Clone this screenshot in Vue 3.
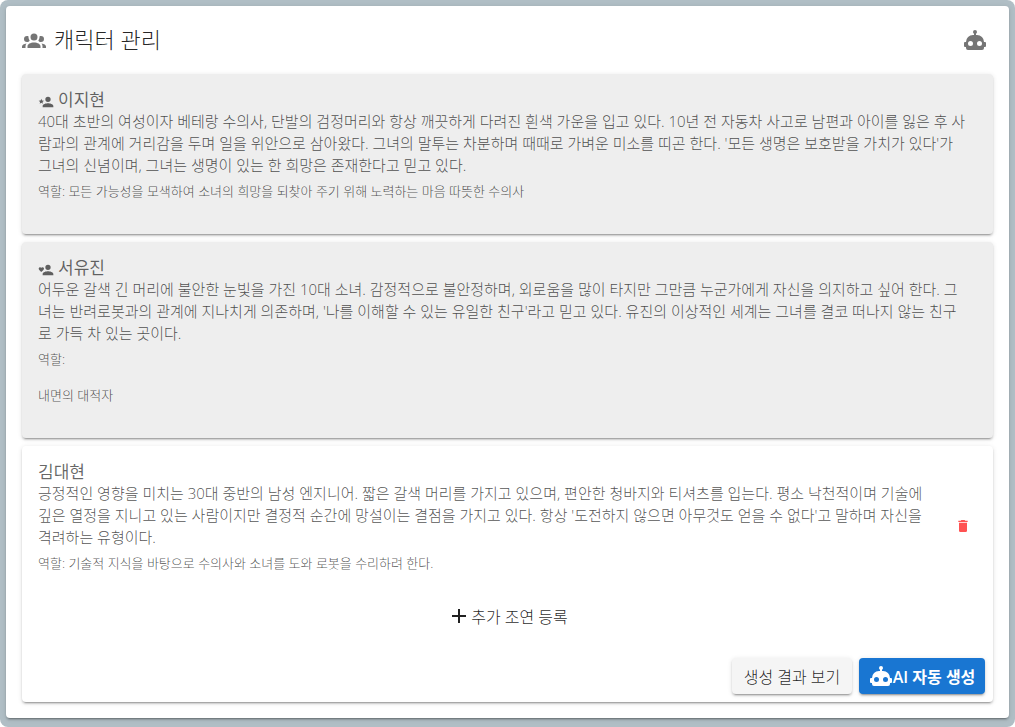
<template>
  <div class="page">
    <main class="panel">
      <header class="toolbar">
        <h1 class="toolbar-title">
          <svg class="icon" viewBox="0 0 24 24" aria-hidden="true">
            <path :d="icons.group" />
          </svg>
          캐릭터 관리
        </h1>
        <button type="button" class="icon-button" aria-label="AI 자동 생성">
          <svg class="icon" viewBox="0 0 24 24" aria-hidden="true">
            <path :d="icons.robot" />
          </svg>
        </button>
      </header>

      <section
        v-for="character in characters"
        :key="character.name"
        class="card"
        :class="{ locked: character.icon }"
      >
        <div class="card-row">
          <div class="card-text">
            <h2 class="name">
              <svg
                v-if="character.icon"
                class="icon small"
                viewBox="0 0 24 24"
                aria-hidden="true"
              >
                <path :d="icons[character.icon]" />
              </svg>
              {{ character.name }}
            </h2>
            <p class="description">{{ character.description }}</p>
            <p v-for="line in character.role" :key="line" class="role">
              {{ line }}
            </p>
          </div>
          <button
            v-if="!character.icon"
            type="button"
            class="icon-button delete"
            aria-label="삭제"
            @click="remove(character)"
          >
            <svg class="icon small" viewBox="0 0 24 24" aria-hidden="true">
              <path :d="icons.trash" />
            </svg>
          </button>
        </div>

        <template v-if="!character.icon">
          <div class="add-row">
            <button type="button" class="button text">
              <svg class="icon" viewBox="0 0 24 24" aria-hidden="true">
                <path :d="icons.plus" />
              </svg>
              추가 조연 등록
            </button>
          </div>
          <div class="actions">
            <button type="button" class="button">생성 결과 보기</button>
            <button type="button" class="button primary">
              <svg class="icon" viewBox="0 0 24 24" aria-hidden="true">
                <path :d="icons.robot" />
              </svg>
              AI 자동 생성
            </button>
          </div>
        </template>
      </section>
    </main>
  </div>
</template>

<script setup>
import { ref } from "vue";

const person =
  "M15,14C12.33,14 7,15.33 7,18V20H23V18C23,15.33 17.67,14 15,14M15,12A4,4 0 0,0 19,8A4,4 0 0,0 15,4A4,4 0 0,0 11,8A4,4 0 0,0 15,12Z";

const icons = {
  group:
    "M12,5.5A3.5,3.5 0 0,1 15.5,9A3.5,3.5 0 0,1 12,12.5A3.5,3.5 0 0,1 8.5,9A3.5,3.5 0 0,1 12,5.5M5,8C5.56,8 6.08,8.15 6.53,8.42C6.38,9.85 6.8,11.27 7.66,12.38C7.16,13.34 6.16,14 5,14A3,3 0 0,1 2,11A3,3 0 0,1 5,8M19,8A3,3 0 0,1 22,11A3,3 0 0,1 19,14C17.84,14 16.84,13.34 16.34,12.38C17.2,11.27 17.62,9.85 17.47,8.42C17.92,8.15 18.44,8 19,8M5.5,18.25C5.5,16.18 8.41,14.5 12,14.5C15.59,14.5 18.5,16.18 18.5,18.25V20H5.5V18.25M0,20V18.5C0,17.11 1.89,15.94 4.45,15.6C3.86,16.28 3.5,17.22 3.5,18.25V20H0M24,20H20.5V18.25C20.5,17.22 20.14,16.28 19.55,15.6C22.11,15.94 24,17.11 24,18.5V20Z",
  robot:
    "M12,2A2,2 0 0,1 14,4C14,4.74 13.6,5.39 13,5.73V7H14A7,7 0 0,1 21,14H22A1,1 0 0,1 23,15V18A1,1 0 0,1 22,19H21V20A2,2 0 0,1 19,22H5A2,2 0 0,1 3,20V19H2A1,1 0 0,1 1,18V15A1,1 0 0,1 2,14H3A7,7 0 0,1 10,7H11V5.73C10.4,5.39 10,4.74 10,4A2,2 0 0,1 12,2M7.5,13A2.5,2.5 0 0,0 5,15.5A2.5,2.5 0 0,0 7.5,18A2.5,2.5 0 0,0 10,15.5A2.5,2.5 0 0,0 7.5,13M16.5,13A2.5,2.5 0 0,0 14,15.5A2.5,2.5 0 0,0 16.5,18A2.5,2.5 0 0,0 19,15.5A2.5,2.5 0 0,0 16.5,13Z",
  star:
    person +
    "M5,13.28L7.45,14.77L6.8,11.96L9,10.08L6.11,9.83L5,7.19L3.87,9.83L1,10.08L3.18,11.96L2.5,14.77Z",
  heart:
    person +
    "M5,15L4.4,14.5C2.4,12.6 1,11.4 1,9.9C1,8.7 2,7.7 3.2,7.7C3.9,7.7 4.6,8 5,8.5C5.4,8 6.1,7.7 6.8,7.7C8,7.7 9,8.6 9,9.9C9,11.4 7.6,12.6 5.6,14.4L5,15Z",
  trash:
    "M19,4H15.5L14.5,3H9.5L8.5,4H5V6H19M6,19A2,2 0 0,0 8,21H16A2,2 0 0,0 18,19V7H6V19Z",
  plus: "M19,13H13V19H11V13H5V11H11V5H13V11H19V13Z",
};

const characters = ref([
  {
    name: "이지현",
    icon: "star",
    description:
      "40대 초반의 여성이자 베테랑 수의사, 단발의 검정머리와 항상 깨끗하게 다려진 흰색 가운을 입고 있다. 10년 전 자동차 사고로 남편과 아이를 잃은 후 사\n" +
      "람과의 관계에 거리감을 두며 일을 위안으로 삼아왔다. 그녀의 말투는 차분하며 때때로 가벼운 미소를 띠곤 한다. '모든 생명은 보호받을 가치가 있다'가\n" +
      "그녀의 신념이며, 그녀는 생명이 있는 한 희망은 존재한다고 믿고 있다.",
    role: [
      "역할: 모든 가능성을 모색하여 소녀의 희망을 되찾아 주기 위해 노력하는 마음 따뜻한 수의사",
    ],
  },
  {
    name: "서유진",
    icon: "heart",
    description:
      "어두운 갈색 긴 머리에 불안한 눈빛을 가진 10대 소녀. 감정적으로 불안정하며, 외로움을 많이 타지만 그만큼 누군가에게 자신을 의지하고 싶어 한다. 그\n" +
      "녀는 반려로봇과의 관계에 지나치게 의존하며, '나를 이해할 수 있는 유일한 친구'라고 믿고 있다. 유진의 이상적인 세계는 그녀를 결코 떠나지 않는 친구\n" +
      "로 가득 차 있는 곳이다.",
    role: ["역할:", "내면의 대적자"],
  },
  {
    name: "김대현",
    icon: null,
    description:
      "긍정적인 영향을 미치는 30대 중반의 남성 엔지니어. 짧은 갈색 머리를 가지고 있으며, 편안한 청바지와 티셔츠를 입는다. 평소 낙천적이며 기술에\n" +
      "깊은 열정을 지니고 있는 사람이지만 결정적 순간에 망설이는 결점을 가지고 있다. 항상 '도전하지 않으면 아무것도 얻을 수 없다'고 말하며 자신을\n" +
      "격려하는 유형이다.",
    role: ["역할: 기술적 지식을 바탕으로 수의사와 소녀를 도와 로봇을 수리하려 한다."],
  },
]);

const remove = (character) => {
  characters.value = characters.value.filter((c) => c !== character);
};
</script>

<style>
body {
  background: #fff;
}
</style>

<style scoped>
.page {
  box-sizing: border-box;
  min-height: 100vh;
  padding: 6px 6px 9px;
  border-radius: 8px;
  background: #b0bec5;
  color: rgba(0, 0, 0, 0.87);
  font-family: "Open Sans", "Noto Sans CJK KR", sans-serif;
  font-weight: 300;
}

.panel {
  display: flex;
  flex-direction: column;
  gap: 8px;
  padding: 0 16px 16px;
  border-radius: 4px;
  background: #fff;
  box-shadow: 0 3px 1px -2px rgba(0, 0, 0, 0.2),
    0 2px 2px 0 rgba(0, 0, 0, 0.14), 0 1px 5px 0 rgba(0, 0, 0, 0.12);
}

.toolbar {
  display: flex;
  align-items: center;
  justify-content: space-between;
  padding-top: 15px;
  padding-bottom: 9px;
}

.toolbar-title {
  display: flex;
  align-items: center;
  gap: 8px;
  margin: 0;
  font-size: 22px;
  font-weight: 300;
  line-height: 36px;
}

.icon {
  flex: none;
  width: 24px;
  height: 24px;
  fill: currentColor;
}

.icon.small {
  width: 16px;
  height: 16px;
}

.toolbar .icon {
  margin-top: 2px;
  color: #757575;
}

.icon-button {
  display: flex;
  padding: 0;
  border: 0;
  background: none;
  cursor: pointer;
}

.toolbar .icon-button {
  margin-right: 6px;
}

.card {
  border-radius: 4px;
  background: #fff;
  box-shadow: 0 3px 1px -2px rgba(0, 0, 0, 0.2),
    0 2px 2px 0 rgba(0, 0, 0, 0.14), 0 1px 5px 0 rgba(0, 0, 0, 0.12);
}

.card.locked {
  padding-bottom: 16px;
  background: #eee;
}

.card-row {
  display: flex;
  align-items: center;
  gap: 8px;
  padding: 16px;
}

.card-text {
  flex: 1;
  color: rgba(0, 0, 0, 0.7);
}

.name {
  display: flex;
  align-items: center;
  gap: 4px;
  margin: 0;
  color: rgba(0, 0, 0, 0.6);
  font-size: 17px;
  font-weight: 400;
  line-height: 20px;
}

.name .icon {
  margin-top: 4px;
}

.description {
  margin: 0;
  font-size: 15px;
  line-height: 22px;
  white-space: pre-line;
}

.role {
  margin: 4px 0 0;
  font-size: 13px;
  line-height: 22px;
}

.role + .role {
  margin-top: 14px;
}

.delete {
  margin-top: 16px;
  padding: 6px;
  color: #ff5252;
}

.add-row {
  display: flex;
  justify-content: center;
  padding: 8px 0 24px;
}

.actions {
  display: flex;
  justify-content: flex-end;
  gap: 7px;
  padding: 0 8px 8px;
}

.button {
  display: flex;
  align-items: center;
  justify-content: center;
  height: 36px;
  min-width: 120px;
  padding: 0 8px;
  border: 0;
  border-radius: 4px;
  background: #f5f5f5;
  color: rgba(0, 0, 0, 0.87);
  font-family: inherit;
  font-size: 16px;
  font-weight: 300;
  box-shadow: 0 3px 1px -2px rgba(0, 0, 0, 0.2),
    0 2px 2px 0 rgba(0, 0, 0, 0.14), 0 1px 5px 0 rgba(0, 0, 0, 0.12);
  cursor: pointer;
}

.button.text {
  background: none;
  box-shadow: none;
}

.button.primary {
  min-width: 126px;
  background: #1976d2;
  color: #fff;
  font-weight: 600;
}
</style>
